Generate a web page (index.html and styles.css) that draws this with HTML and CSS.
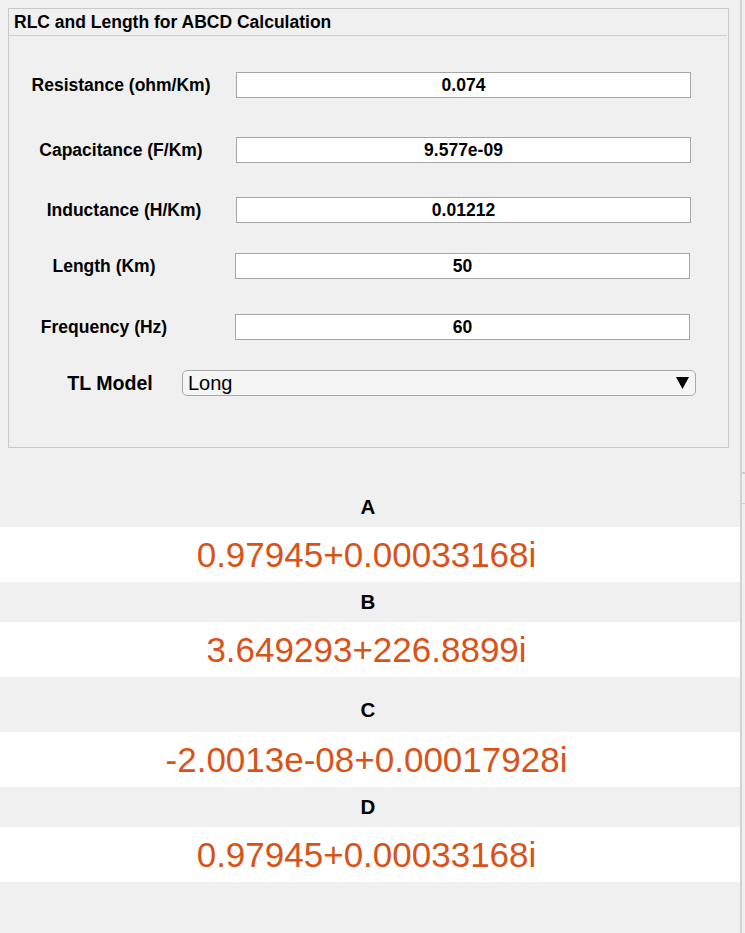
FILE: index.html
```html
<!DOCTYPE html>
<html>
<head>
<meta charset="utf-8">
<link rel="stylesheet" href="styles.css">
</head>
<body>
<div class="app">
  <main class="main">
    <section class="panel">
      <h1 class="panel-title">RLC and Length for ABCD Calculation</h1>
      <div class="panel-body">
        <div class="field f1"><span class="field-label">Resistance (ohm/Km)</span><div class="field-input">0.074</div></div>
        <div class="field f2"><span class="field-label">Capacitance (F/Km)</span><div class="field-input">9.577e-09</div></div>
        <div class="field f3"><span class="field-label">Inductance (H/Km)</span><div class="field-input">0.01212</div></div>
        <div class="field field-short f4"><span class="field-label">Length (Km)</span><div class="field-input">50</div></div>
        <div class="field field-short f5"><span class="field-label">Frequency (Hz)</span><div class="field-input">60</div></div>
        <div class="field field-select"><span class="field-label">TL Model</span>
          <div class="select"><span class="select-text">Long</span>
            <svg class="select-arrow" width="13" height="12" viewBox="0 0 13 12"><polygon points="0,0 13,0 6.5,12" fill="#000"/></svg>
          </div>
        </div>
      </div>
    </section>
    <section class="results">
      <div class="result-label">A</div>
      <div class="result-value">0.97945+0.00033168i</div>
      <div class="result-label">B</div>
      <div class="result-value">3.649293+226.8899i</div>
      <div class="result-label result-label-gap">C</div>
      <div class="result-value">-2.0013e-08+0.00017928i</div>
      <div class="result-label">D</div>
      <div class="result-value">0.97945+0.00033168i</div>
    </section>
  </main>
  <aside class="edge">
    <span class="tick tick-1"></span>
    <span class="tick tick-2"></span>
  </aside>
</div>
</body>
</html>
```

FILE: styles.css
```css
html, body {
  margin: 0;
  padding: 0;
}
body {
  background: #f0f0f0;
  font-family: "Liberation Sans", Arial, Helvetica, sans-serif;
  color: #000;
  height: 933px;
  overflow: hidden;
}
.app {
  display: flex;
  height: 933px;
}
.main {
  width: 740px;
  flex: none;
}
.panel {
  box-sizing: border-box;
  margin: 8px 0 0 8px;
  width: 721px;
  height: 440px;
  border: 1px solid #c9c9c9;
}
.panel-title {
  margin: 0 1px 0 0;
  height: 26px;
  line-height: 26px;
  padding-left: 5px;
  font-size: 17.5px;
  font-weight: bold;
  border-bottom: 1px solid #cdcdcd;
}
.panel-body {
  padding-top: 36px;
}
.field {
  display: grid;
  grid-template-columns: 227px 455px;
  height: 26px;
  align-items: center;
}
.field-label {
  text-align: center;
  font-size: 17.5px;
  font-weight: bold;
  padding-right: 3px;
}
.field-input {
  box-sizing: border-box;
  height: 26px;
  line-height: 24px;
  background: #fff;
  border: 1px solid #a6a6a6;
  text-align: center;
  font-size: 17.5px;
  font-weight: bold;
}
.f2 { margin-top: 39px; }
.f3 { margin-top: 34px; }
.f3 .field-label { padding: 0 0 0 3px; }
.f4 { margin-top: 30px; }
.f5 { margin-top: 35px; }
.field-short {
  grid-template-columns: 226px 455px;
}
.field-short .field-label {
  padding-right: 36px;
}
.field-select {
  margin-top: 30px;
  grid-template-columns: 173px 514px;
}
.field-select .field-label {
  padding: 0 0 0 29px;
  font-size: 19.6px;
}
.select {
  box-sizing: border-box;
  height: 26px;
  border: 1px solid #a9a9a9;
  border-radius: 5px;
  background: #f5f5f5;
  display: flex;
  align-items: center;
  justify-content: space-between;
  padding: 0 6px 0 5px;
}
.select-text {
  font-size: 20px;
}
.select-arrow {
  display: block;
}
.results {
  padding-top: 39px;
}
.result-label {
  box-sizing: border-box;
  height: 40px;
  display: flex;
  align-items: center;
  justify-content: center;
  padding-right: 4px;
  font-size: 20.5px;
  font-weight: bold;
}
.result-label-gap {
  margin-top: 15px;
  padding-bottom: 4px;
}
.result-value {
  box-sizing: border-box;
  height: 55px;
  background: #fff;
  display: flex;
  align-items: center;
  justify-content: center;
  padding-right: 7px;
  font-size: 35px;
  color: #d95319;
}
.edge {
  box-sizing: border-box;
  width: 5px;
  flex: none;
  border-left: 2px solid #d2d2d2;
  display: flex;
  flex-direction: column;
  padding-top: 472px;
  gap: 29px;
}
.tick {
  display: block;
  background: #cfcfcf;
}
.tick-1 { height: 2px; }
.tick-2 { height: 1px; }
```
